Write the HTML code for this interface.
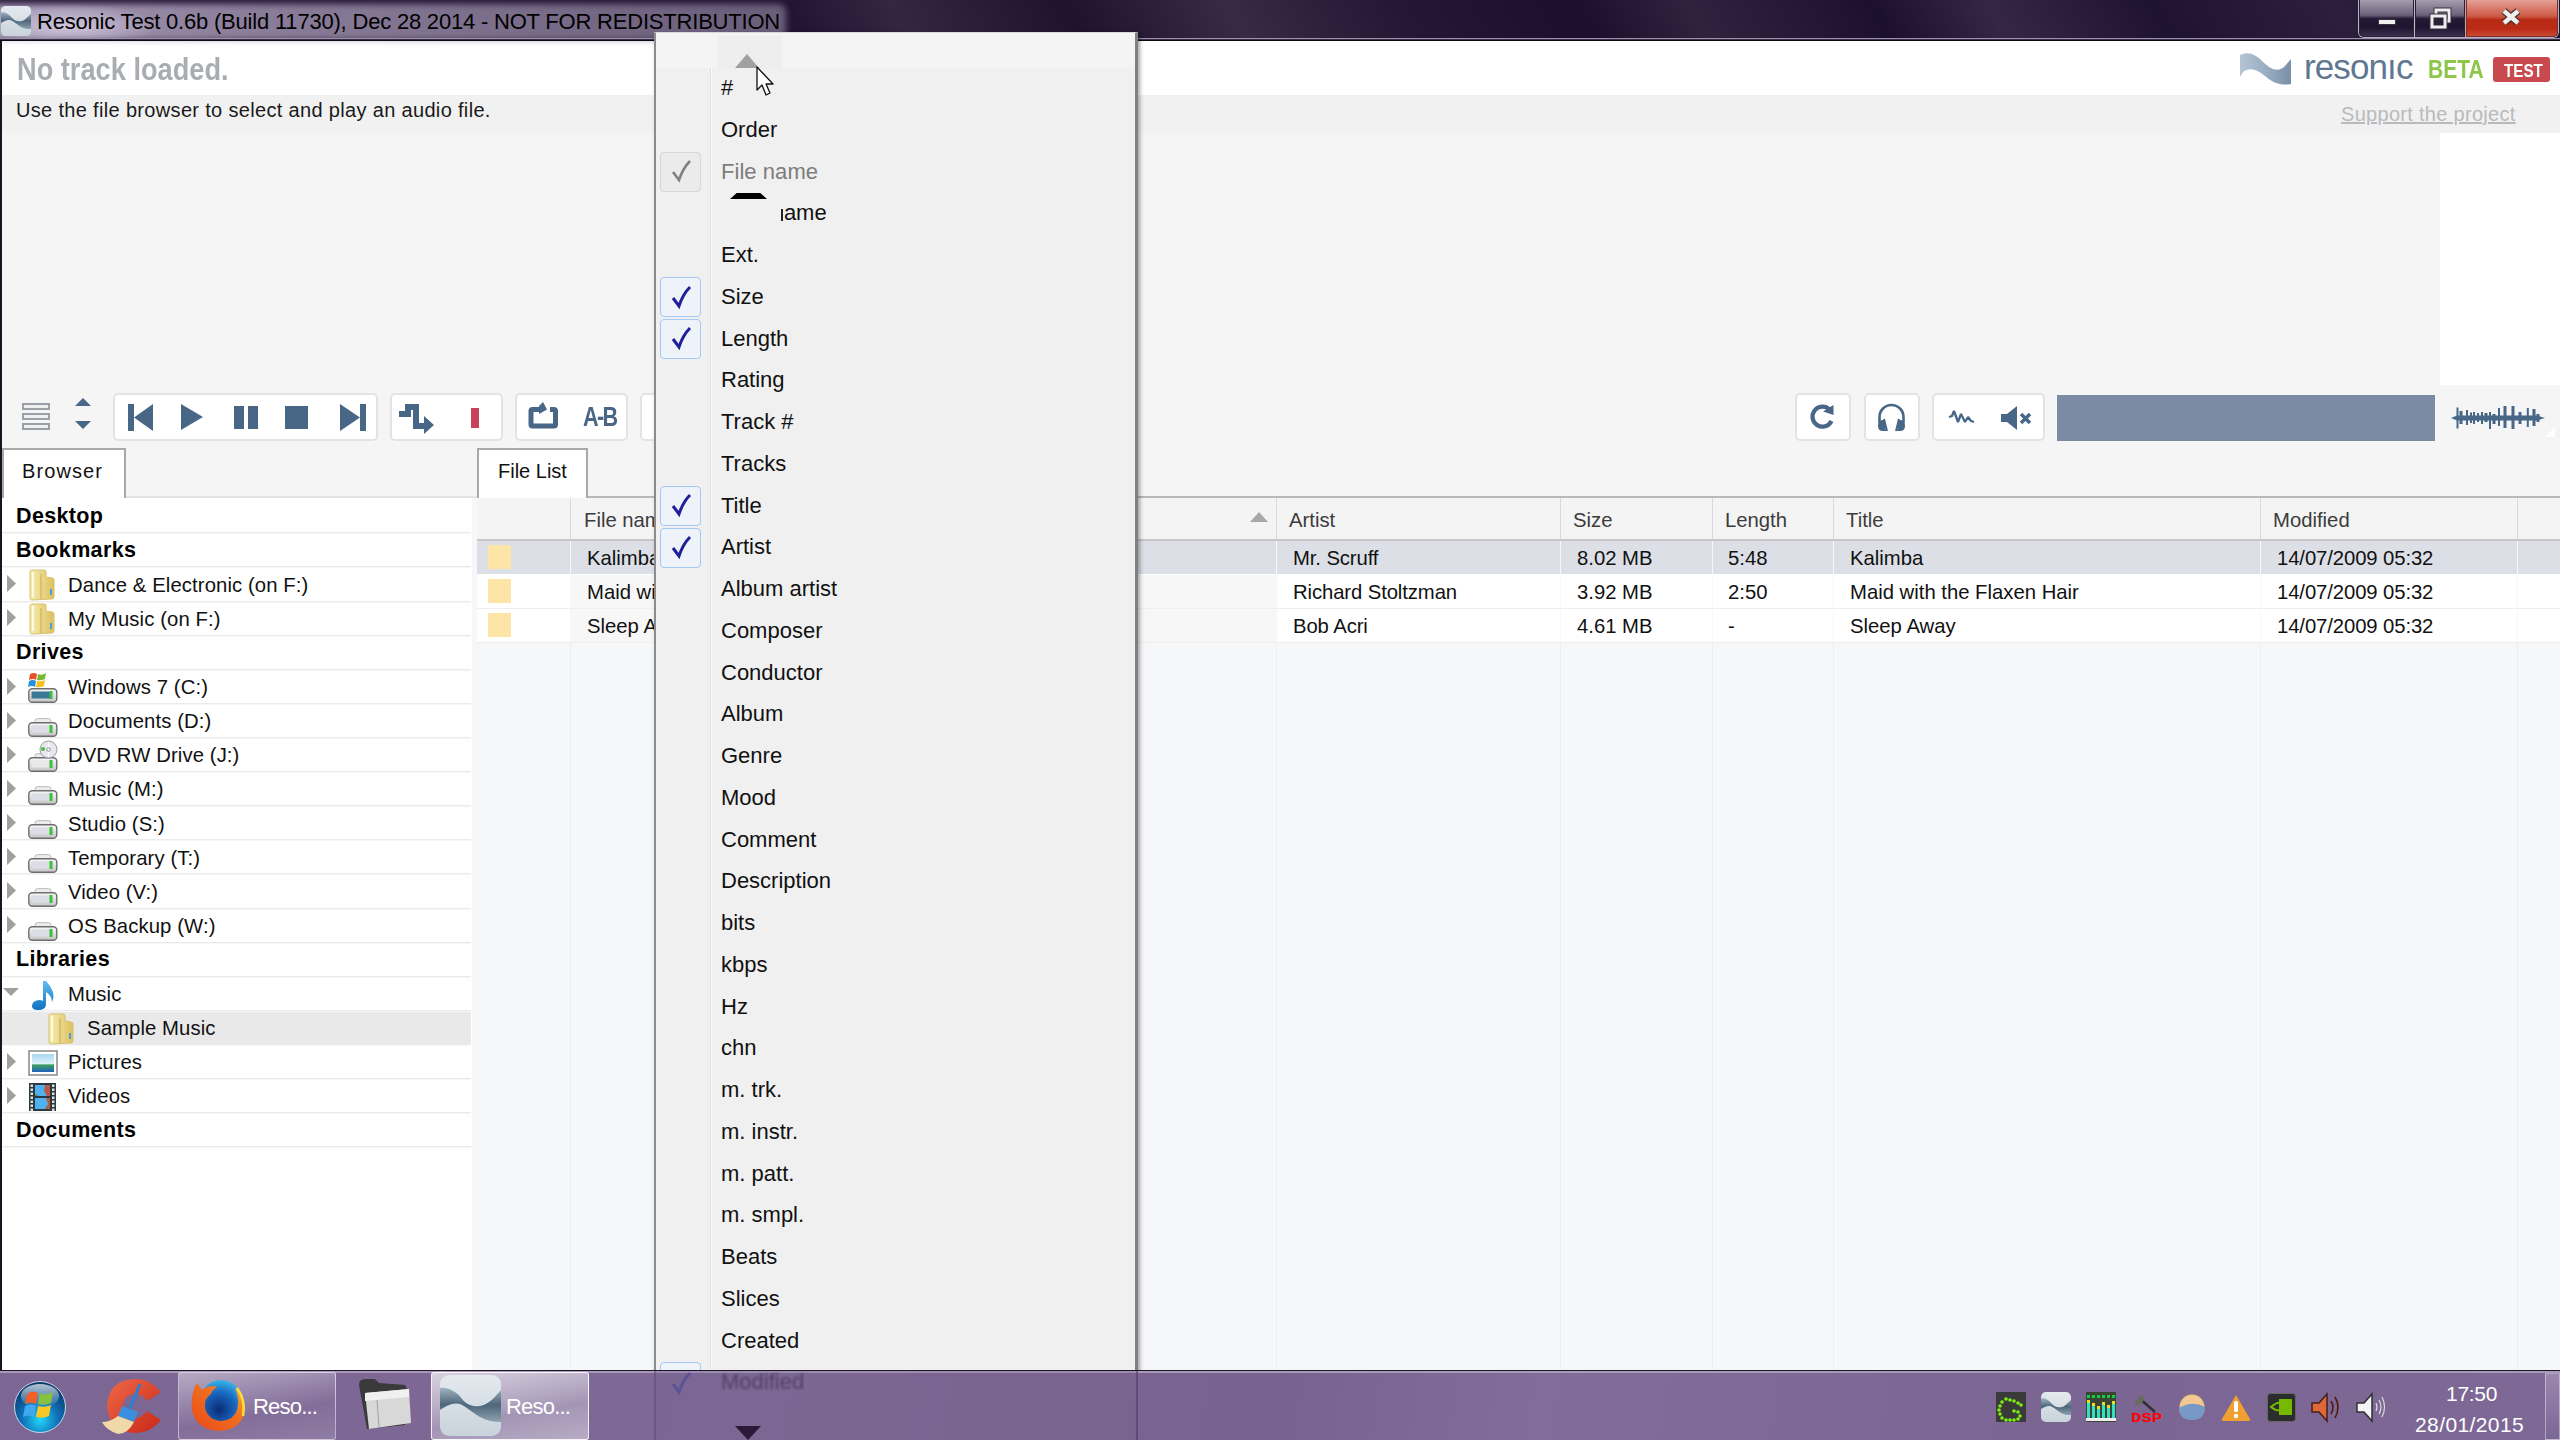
<!DOCTYPE html><html><head><meta charset="utf-8"><style>
*{margin:0;padding:0;box-sizing:border-box}
html,body{width:2560px;height:1440px;overflow:hidden;background:#f4f4f4;font-family:"Liberation Sans", sans-serif;}
.a{position:absolute}
.t{position:absolute;white-space:nowrap;line-height:1}
svg{position:absolute;overflow:visible}
</style></head><body><div class="a" style="left:0px;top:41px;width:2560px;height:54px;background:#fff"></div><div class="a" style="left:0px;top:95px;width:2560px;height:38px;background:#f1f1f1"></div><div class="a" style="left:0px;top:133px;width:2560px;height:365px;background:#f5f5f5"></div><div class="a" style="left:2440px;top:133px;width:120px;height:252px;background:#fff"></div><div class="t" style="left:17px;top:52.8px;font-size:32px;color:#a9adb2;font-weight:bold;transform:scaleX(0.85);transform-origin:0 0">No track loaded.</div><div class="t" style="left:16px;top:100.0px;font-size:20px;color:#1a1a1a;font-weight:normal;letter-spacing:0.33px">Use the file browser to select and play an audio file.</div><svg style="left:2239px;top:52px" width="54" height="32" viewBox="0 0 54 32"><defs><linearGradient id="lg1" x1="0" x2="1"><stop offset="0" stop-color="#b4c4d4"/><stop offset="0.5" stop-color="#9aaec2"/><stop offset="1" stop-color="#7a90a8"/></linearGradient></defs><path d="M1 3 C8 0 14 1 21 7 C30 16 38 22 46 14 L52 7 L52 32 C42 34 34 31 26 24 C18 17 10 15 4 20 L1 25 Z" fill="url(#lg1)"/></svg><div class="t" style="left:2304px;top:49.25px;font-size:35px;color:#5f7790;font-weight:normal;letter-spacing:-0.9px">resonıc</div><div class="t" style="left:2428px;top:56.75px;font-size:25px;color:#8cc74a;font-weight:bold;transform:scaleX(0.84);transform-origin:0 0">BETA</div><div class="a" style="left:2493px;top:57px;width:57px;height:25px;background:#c94a4e;border-radius:3px"></div><div class="t" style="left:2504px;top:60.85px;font-size:19px;color:#fff;font-weight:bold;transform:scaleX(0.8);transform-origin:0 0">TEST</div><div class="t" style="left:2341px;top:104.0px;font-size:20px;color:#b8babd;font-weight:normal;text-decoration:underline;letter-spacing:0.3px">Support the project</div><div class="a" style="left:22px;top:403px;width:28px;height:7px;border:2px solid #9aa0a6;background:#eef0f2"></div><div class="a" style="left:22px;top:413px;width:28px;height:7px;border:2px solid #9aa0a6;background:#eef0f2"></div><div class="a" style="left:22px;top:423px;width:28px;height:7px;border:2px solid #9aa0a6;background:#eef0f2"></div><svg style="left:74px;top:397px" width="18" height="34" viewBox="0 0 18 34"><path d="M1 9 L9 1 L17 9 Z M1 24 L9 32 L17 24 Z" fill="#486787"/></svg><div class="a" style="left:113px;top:393px;width:265px;height:48px;background:#fff;border:2px solid #e3e3e3;border-radius:5px"></div><svg style="left:120px;top:400px" width="250" height="34" viewBox="0 0 250 34"><rect x="8" y="4" width="6" height="27" fill="#486787"/><path d="M14 17.5 L33 4 L33 31 Z" fill="#486787"/><path d="M61 4 L83 17 L61 30 Z" fill="#486787"/><rect x="114" y="6" width="10" height="23" fill="#486787"/><rect x="128" y="6" width="10" height="23" fill="#486787"/><rect x="165" y="6" width="23" height="23" fill="#486787"/><path d="M220 4 L240 17.5 L220 31 Z" fill="#486787"/><rect x="240" y="4" width="6" height="27" fill="#486787"/></svg><div class="a" style="left:390px;top:393px;width:113px;height:48px;background:#fff;border:2px solid #e3e3e3;border-radius:5px"></div><svg style="left:398px;top:400px" width="40" height="34" viewBox="0 0 40 34"><path d="M1 11 L7 11 L7 4 L21 4 L21 23 L26 23 L26 16 L36 25 L26 34 L26 29 L15 29 L15 10 L13 10 L13 17 L1 17 Z" fill="#486787"/></svg><div class="a" style="left:471px;top:408px;width:8px;height:20px;background:#c8435a"></div><div class="a" style="left:515px;top:393px;width:113px;height:48px;background:#fff;border:2px solid #e3e3e3;border-radius:5px"></div><svg style="left:526px;top:400px" width="36" height="32" viewBox="0 0 36 32"><path d="M16 9.5 L6.5 9.5 Q5 9.5 5 11 L5 24.5 Q5 26 6.5 26 L28 26 Q29.5 26 29.5 24.5 L29.5 11 Q29.5 9.5 28 9.5 L24 9.5" fill="none" stroke="#486787" stroke-width="5"/><path d="M13 6 L13 14 L21 9.5 L17 2 Z" fill="#486787"/></svg><div class="t" style="left:583px;top:404.05px;font-size:27px;color:#486787;font-weight:bold;letter-spacing:-2px;transform:scaleX(0.8);transform-origin:0 0">A-B</div><div class="a" style="left:640px;top:393px;width:40px;height:48px;background:#fff;border:2px solid #e3e3e3;border-radius:5px"></div><div class="a" style="left:1795px;top:393px;width:56px;height:48px;background:#fff;border:2px solid #e3e3e3;border-radius:5px"></div><div class="a" style="left:1864px;top:393px;width:56px;height:48px;background:#fff;border:2px solid #e3e3e3;border-radius:5px"></div><div class="a" style="left:1932px;top:393px;width:113px;height:48px;background:#fff;border:2px solid #e3e3e3;border-radius:5px"></div><svg style="left:1806px;top:402px" width="32" height="32" viewBox="0 0 32 32"><path d="M23.5 7.5 A10 10 0 1 0 25.5 19" fill="none" stroke="#486787" stroke-width="4.2"/><path d="M17 9.5 L27.5 3 L27.5 13 Z" fill="#486787"/></svg><svg style="left:1877px;top:403px" width="30" height="30" viewBox="0 0 30 30"><path d="M2.5 20 L2.5 14 A12 12 0 0 1 26.5 14 L26.5 20" fill="none" stroke="#486787" stroke-width="2.6"/><path d="M1 23 Q1 18 5 17 L7 17 L9 28 L6 28 Q1 28 1 23 Z M28 23 Q28 18 24 17 L22 17 L20 28 L23 28 Q28 28 28 23 Z" fill="#486787"/><path d="M7 16 L10 28 M22 16 L19 28" stroke="#486787" stroke-width="2"/></svg><svg style="left:1948px;top:409px" width="28" height="16" viewBox="0 0 28 16"><path d="M1 8 L4 7 L6 2 L10 13 L13 5 L17 13 L20 8 L23 12 L26 13" fill="none" stroke="#486787" stroke-width="2.3" stroke-linejoin="bevel"/></svg><svg style="left:2000px;top:405px" width="34" height="26" viewBox="0 0 34 26"><path d="M1 9 L7 9 L17 1 L17 25 L7 17 L1 17 Z" fill="#486787"/><path d="M21 9 L30 18 M30 9 L21 18" stroke="#486787" stroke-width="3.5"/></svg><div class="a" style="left:2057px;top:395px;width:378px;height:46px;background:#7a8ba3"></div><svg style="left:2451px;top:405px" width="96" height="26" viewBox="0 0 96 26"><path d="M0 13 L6 10.5 L86 10.5 L94 13 L86 15.5 L6 15.5 Z" fill="#486787"/><rect x="5.5" y="2.5" width="2" height="21.0" fill="#486787"/><rect x="8.5" y="6" width="3" height="13" fill="#486787"/><rect x="15.0" y="5" width="2" height="15" fill="#486787"/><rect x="19.0" y="7.5" width="2" height="10.5" fill="#486787"/><rect x="22.0" y="7" width="2" height="12" fill="#486787"/><rect x="26.0" y="8" width="2" height="9" fill="#486787"/><rect x="30.0" y="7" width="2" height="12" fill="#486787"/><rect x="33.5" y="8" width="3" height="9" fill="#486787"/><rect x="38.0" y="7" width="2" height="17" fill="#486787"/><rect x="41.5" y="9" width="3" height="10" fill="#486787"/><rect x="47.0" y="3" width="2" height="18" fill="#486787"/><rect x="52.5" y="1" width="3" height="22" fill="#486787"/><rect x="60.5" y="1" width="3" height="23" fill="#486787"/><rect x="67.5" y="7" width="3" height="12" fill="#486787"/><rect x="75.80000000000018" y="3" width="2" height="19" fill="#486787"/><rect x="81.5" y="4" width="3" height="17" fill="#486787"/><rect x="85.5" y="9" width="3" height="8" fill="#486787"/></svg><svg style="left:2545px;top:427px" width="11" height="11" viewBox="0 0 11 11"><path d="M10 0 L10 10 L0 10 Z" fill="#ffffff"/></svg><div class="a" style="left:2px;top:496px;width:470px;height:2px;background:#e4e4e4"></div><div class="a" style="left:2px;top:448px;width:124px;height:51px;background:#fff;border:2px solid #a9a9a9;border-bottom:none"></div><div class="t" style="left:22px;top:461.0px;font-size:20px;color:#111;font-weight:normal;letter-spacing:1.1px">Browser</div><div class="a" style="left:472px;top:496px;width:6px;height:2px;background:#e4e4e4"></div><div class="a" style="left:588px;top:496px;width:1972px;height:2px;background:#b9b9b9"></div><div class="a" style="left:477px;top:448px;width:111px;height:51px;background:#fff;border:2px solid #a9a9a9;border-bottom:none"></div><div class="t" style="left:498px;top:461.0px;font-size:20px;color:#111;font-weight:normal;">File List</div><div class="a" style="left:0px;top:0px;width:2560px;height:41px;background:linear-gradient(60deg,#2a1b3a 0px,#221433 700px,#342642 790px,#20122f 940px,#382a46 1080px,#241634 1230px,#1c0e2c 1380px,#30223f 1480px,#1d0f2e 1640px,#342644 1740px,#201231 1880px,#2c1e3c 2040px,#1e1130 2200px,#2a1c38 2560px)"></div><div class="a" style="left:-10px;top:4px;width:796px;height:36px;background:linear-gradient(90deg,rgba(190,178,205,0.85) 0,rgba(165,152,180,0.8) 250px,rgba(140,128,156,0.78) 600px,rgba(130,118,146,0.75) 790px);filter:blur(3px);border-radius:8px"></div><div class="a" style="left:0px;top:0px;width:200px;height:41px;background:radial-gradient(ellipse 90px 22px at 70px 26px,rgba(240,232,250,0.6),rgba(240,232,250,0) 100%)"></div><div class="a" style="left:0px;top:39px;width:2560px;height:2px;background:#3b2d48"></div><div class="a" style="left:0px;top:40px;width:2560px;height:1px;background:#0d0812"></div><svg style="left:1px;top:6px" width="30" height="30" viewBox="0 0 30 30"><defs><linearGradient id="rbg1" x1="0" y1="0" x2="0" y2="1"><stop offset="0" stop-color="#e4eaef"/><stop offset="1" stop-color="#c9d3db"/></linearGradient><linearGradient id="rbd1" x1="0" y1="0" x2="0" y2="1"><stop offset="0" stop-color="#9fb2c0"/><stop offset="0.5" stop-color="#4d6679"/><stop offset="1" stop-color="#8ea2b2"/></linearGradient></defs><g transform="scale(0.4918032786885246)"><rect x="0" y="0" width="61" height="61" rx="9.15" fill="url(#rbg1)"/><path d="M0 13 C8 12 16 16 22 24 C27 30 33 32 40 31 C48 30 55 22 61 15 L61 47 C54 47 47 46 40 42 C33 38 27 32 20 29 C13 27 6 31 0 35 Z" fill="url(#rbd1)"/></g></svg><div class="t" style="left:37px;top:11.3px;font-size:22px;color:#000;font-weight:normal;letter-spacing:-0.2px">Resonic Test 0.6b (Build 11730), Dec 28 2014 - NOT FOR REDISTRIBUTION</div><div class="a" style="left:2358px;top:0px;width:201px;height:38px;border:1px solid #b8b0c4;border-top:none;border-radius:0 0 6px 6px"></div><div class="a" style="left:2359px;top:0px;width:55px;height:37px;border:1px solid #2a2036;border-top:none;border-radius:0 0 0 5px;background:linear-gradient(#a69eb0 0%,#8a8096 20%,#6c627a 42%,#241a34 52%,#1e1430 75%,#3a2f4c 100%)"></div><div class="a" style="left:2378px;top:19px;width:18px;height:6px;background:#f0f0f0;border:1px solid #3a3040"></div><div class="a" style="left:2414px;top:0px;width:1px;height:37px;background:#c0b8c8"></div><div class="a" style="left:2415px;top:0px;width:50px;height:37px;border:1px solid #2a2036;border-top:none;background:linear-gradient(#a69eb0 0%,#8a8096 20%,#6c627a 42%,#241a34 52%,#1e1430 75%,#3a2f4c 100%)"></div><svg style="left:2429px;top:7px" width="23" height="20" viewBox="0 0 23 20"><rect x="7" y="3" width="13" height="11" fill="none" stroke="#3a3040" stroke-width="5"/><rect x="7" y="3" width="13" height="11" fill="none" stroke="#eee" stroke-width="3"/><rect x="3" y="9" width="13" height="11" fill="#3a3040" stroke="#3a3040" stroke-width="5"/><rect x="3" y="9" width="13" height="11" fill="#2a2034" stroke="#eee" stroke-width="3"/></svg><div class="a" style="left:2465px;top:0px;width:1px;height:37px;background:#d0a0a0"></div><div class="a" style="left:2466px;top:0px;width:92px;height:37px;border:1px solid #7a3030;border-top:none;border-radius:0 0 5px 0;background:linear-gradient(#e4a096 0%,#d87868 25%,#cc5a48 45%,#b82a14 55%,#bc2a16 80%,#c84a30 100%)"></div><svg style="left:2500px;top:8px" width="22" height="18" viewBox="0 0 22 18"><path d="M4 3 L18 15 M18 3 L4 15" stroke="#50302c" stroke-width="7"/><path d="M4 3 L18 15 M18 3 L4 15" stroke="#eee" stroke-width="4.5"/></svg><div class="a" style="left:0px;top:38px;width:2560px;height:1px;background:#9a90a8"></div><div class="a" style="left:0px;top:41px;width:2px;height:1330px;background:#1a1320"></div><div class="a" style="left:2px;top:498px;width:470px;height:872px;background:#fff"></div><div class="a" style="left:2px;top:532px;width:469px;height:1px;background:#ebebeb"></div><div class="a" style="left:2px;top:533px;width:469px;height:1px;background:#f6f6f6"></div><div class="t" style="left:16px;top:505.52px;font-size:21.5px;color:#000;font-weight:bold;letter-spacing:0.35px">Desktop</div><div class="a" style="left:2px;top:566px;width:469px;height:1px;background:#ebebeb"></div><div class="a" style="left:2px;top:567px;width:469px;height:1px;background:#f6f6f6"></div><div class="t" style="left:16px;top:539.62px;font-size:21.5px;color:#000;font-weight:bold;letter-spacing:0.35px">Bookmarks</div><div class="a" style="left:2px;top:601px;width:469px;height:1px;background:#ebebeb"></div><div class="a" style="left:2px;top:602px;width:469px;height:1px;background:#f6f6f6"></div><svg style="left:7px;top:575px" width="9" height="17" viewBox="0 0 9 17"><path d="M0 0 L9 8.5 L0 17 Z" fill="#a0a0a0"/></svg><svg style="left:29px;top:569px" width="26" height="32" viewBox="0 0 26 32"><defs><linearGradient id="fd" x1="0" x2="1"><stop offset="0" stop-color="#f6eeb0"/><stop offset="1" stop-color="#dcc060"/></linearGradient></defs><path d="M1 3 Q1 1 3 1 L15 1 Q17 1 17 3 L17 8 L23 9 Q25 9 25 11 L25 28 Q25 30 23 30 L3 31 Q1 31 1 29 Z" fill="url(#fd)" stroke="#d8c070" stroke-width="1"/><path d="M4 3 L4 28" stroke="#fffbe0" stroke-width="2"/><path d="M12 5 L12 30" stroke="#c8a850" stroke-width="1"/><rect x="21" y="20" width="2" height="6" fill="#4aa0d0"/></svg><div class="t" style="left:68px;top:574.75px;font-size:20.3px;color:#111;font-weight:normal;letter-spacing:0.1px">Dance &amp; Electronic (on F:)</div><div class="a" style="left:2px;top:635px;width:469px;height:1px;background:#ebebeb"></div><div class="a" style="left:2px;top:636px;width:469px;height:1px;background:#f6f6f6"></div><svg style="left:7px;top:609px" width="9" height="17" viewBox="0 0 9 17"><path d="M0 0 L9 8.5 L0 17 Z" fill="#a0a0a0"/></svg><svg style="left:29px;top:603px" width="26" height="32" viewBox="0 0 26 32"><defs><linearGradient id="fd" x1="0" x2="1"><stop offset="0" stop-color="#f6eeb0"/><stop offset="1" stop-color="#dcc060"/></linearGradient></defs><path d="M1 3 Q1 1 3 1 L15 1 Q17 1 17 3 L17 8 L23 9 Q25 9 25 11 L25 28 Q25 30 23 30 L3 31 Q1 31 1 29 Z" fill="url(#fd)" stroke="#d8c070" stroke-width="1"/><path d="M4 3 L4 28" stroke="#fffbe0" stroke-width="2"/><path d="M12 5 L12 30" stroke="#c8a850" stroke-width="1"/><rect x="21" y="20" width="2" height="6" fill="#4aa0d0"/></svg><div class="t" style="left:68px;top:608.85px;font-size:20.3px;color:#111;font-weight:normal;letter-spacing:0.1px">My Music (on F:)</div><div class="a" style="left:2px;top:669px;width:469px;height:1px;background:#ebebeb"></div><div class="a" style="left:2px;top:670px;width:469px;height:1px;background:#f6f6f6"></div><div class="t" style="left:16px;top:641.93px;font-size:21.5px;color:#000;font-weight:bold;letter-spacing:0.35px">Drives</div><div class="a" style="left:2px;top:703px;width:469px;height:1px;background:#ebebeb"></div><div class="a" style="left:2px;top:704px;width:469px;height:1px;background:#f6f6f6"></div><svg style="left:7px;top:678px" width="9" height="17" viewBox="0 0 9 17"><path d="M0 0 L9 8.5 L0 17 Z" fill="#a0a0a0"/></svg><svg style="left:28px;top:684px" width="30" height="20" viewBox="0 0 30 20"><defs><linearGradient id="hd" x1="0" y1="0" x2="0" y2="1"><stop offset="0" stop-color="#f8f8f8"/><stop offset="1" stop-color="#c4c4c4"/></linearGradient></defs><rect x="0.8" y="4.8" width="28" height="13.5" rx="3.5" fill="url(#hd)" stroke="#6e6e6e" stroke-width="1.4"/><rect x="3.5" y="7.5" width="19" height="7" fill="#3a7898"/><rect x="21.5" y="7" width="3" height="8" fill="#3cc040"/></svg><svg style="left:28px;top:671px" width="22" height="20" viewBox="0 0 22 20"><path d="M2 3 Q6 1 9 3 L8 9 Q5 7 1 9 Z" fill="#e8502a"/><path d="M10 3 Q14 5 18 2 L17 8 Q13 10 9 9 Z" fill="#7ab830"/><path d="M1 10 Q5 8 8 10 L7 16 Q4 14 0 16 Z" fill="#2a90d8"/><path d="M9 10 Q13 11 17 9 L16 15 Q12 17 8 16 Z" fill="#f8c020"/></svg><div class="t" style="left:68px;top:677.04px;font-size:20.3px;color:#111;font-weight:normal;letter-spacing:0.1px">Windows 7 (C:)</div><div class="a" style="left:2px;top:737px;width:469px;height:1px;background:#ebebeb"></div><div class="a" style="left:2px;top:738px;width:469px;height:1px;background:#f6f6f6"></div><svg style="left:7px;top:712px" width="9" height="17" viewBox="0 0 9 17"><path d="M0 0 L9 8.5 L0 17 Z" fill="#a0a0a0"/></svg><svg style="left:28px;top:718px" width="30" height="20" viewBox="0 0 30 20"><defs><linearGradient id="hd" x1="0" y1="0" x2="0" y2="1"><stop offset="0" stop-color="#f8f8f8"/><stop offset="1" stop-color="#c4c4c4"/></linearGradient></defs><rect x="7" y="0.6" width="16" height="6" rx="2.5" fill="#ececec" stroke="#bdbdbd" stroke-width="1"/><rect x="0.8" y="4.8" width="28" height="13.5" rx="3.5" fill="url(#hd)" stroke="#6e6e6e" stroke-width="1.4"/><rect x="3.5" y="7.5" width="19" height="7" fill="#dcdde6"/><rect x="21.5" y="7" width="3" height="8" fill="#3cc040"/></svg><div class="t" style="left:68px;top:711.25px;font-size:20.3px;color:#111;font-weight:normal;letter-spacing:0.1px">Documents (D:)</div><div class="a" style="left:2px;top:771px;width:469px;height:1px;background:#ebebeb"></div><div class="a" style="left:2px;top:772px;width:469px;height:1px;background:#f6f6f6"></div><svg style="left:7px;top:746px" width="9" height="17" viewBox="0 0 9 17"><path d="M0 0 L9 8.5 L0 17 Z" fill="#a0a0a0"/></svg><svg style="left:28px;top:753px" width="30" height="20" viewBox="0 0 30 20"><defs><linearGradient id="hd" x1="0" y1="0" x2="0" y2="1"><stop offset="0" stop-color="#f8f8f8"/><stop offset="1" stop-color="#c4c4c4"/></linearGradient></defs><rect x="7" y="0.6" width="16" height="6" rx="2.5" fill="#ececec" stroke="#bdbdbd" stroke-width="1"/><rect x="0.8" y="4.8" width="28" height="13.5" rx="3.5" fill="url(#hd)" stroke="#6e6e6e" stroke-width="1.4"/><rect x="3.5" y="7.5" width="19" height="7" fill="#e8e8e8"/><rect x="21.5" y="7" width="3" height="8" fill="#3cc040"/></svg><svg style="left:39px;top:740px" width="19" height="19" viewBox="0 0 19 19"><circle cx="9.5" cy="9.5" r="8.5" fill="#e8e6ee" stroke="#9a9aa0"/><path d="M9.5 1 L11 9.5 L9.5 18 L8 9.5 Z" fill="#fff"/><circle cx="4" cy="9" r="2" fill="#40c040"/><circle cx="9.5" cy="9.5" r="1.8" fill="#fff" stroke="#888"/></svg><div class="t" style="left:68px;top:745.35px;font-size:20.3px;color:#111;font-weight:normal;letter-spacing:0.1px">DVD RW Drive (J:)</div><div class="a" style="left:2px;top:805px;width:469px;height:1px;background:#ebebeb"></div><div class="a" style="left:2px;top:806px;width:469px;height:1px;background:#f6f6f6"></div><svg style="left:7px;top:780px" width="9" height="17" viewBox="0 0 9 17"><path d="M0 0 L9 8.5 L0 17 Z" fill="#a0a0a0"/></svg><svg style="left:28px;top:786px" width="30" height="20" viewBox="0 0 30 20"><defs><linearGradient id="hd" x1="0" y1="0" x2="0" y2="1"><stop offset="0" stop-color="#f8f8f8"/><stop offset="1" stop-color="#c4c4c4"/></linearGradient></defs><rect x="7" y="0.6" width="16" height="6" rx="2.5" fill="#ececec" stroke="#bdbdbd" stroke-width="1"/><rect x="0.8" y="4.8" width="28" height="13.5" rx="3.5" fill="url(#hd)" stroke="#6e6e6e" stroke-width="1.4"/><rect x="3.5" y="7.5" width="19" height="7" fill="#dcdde6"/><rect x="21.5" y="7" width="3" height="8" fill="#3cc040"/></svg><div class="t" style="left:68px;top:779.45px;font-size:20.3px;color:#111;font-weight:normal;letter-spacing:0.1px">Music (M:)</div><div class="a" style="left:2px;top:839px;width:469px;height:1px;background:#ebebeb"></div><div class="a" style="left:2px;top:840px;width:469px;height:1px;background:#f6f6f6"></div><svg style="left:7px;top:814px" width="9" height="17" viewBox="0 0 9 17"><path d="M0 0 L9 8.5 L0 17 Z" fill="#a0a0a0"/></svg><svg style="left:28px;top:820px" width="30" height="20" viewBox="0 0 30 20"><defs><linearGradient id="hd" x1="0" y1="0" x2="0" y2="1"><stop offset="0" stop-color="#f8f8f8"/><stop offset="1" stop-color="#c4c4c4"/></linearGradient></defs><rect x="7" y="0.6" width="16" height="6" rx="2.5" fill="#ececec" stroke="#bdbdbd" stroke-width="1"/><rect x="0.8" y="4.8" width="28" height="13.5" rx="3.5" fill="url(#hd)" stroke="#6e6e6e" stroke-width="1.4"/><rect x="3.5" y="7.5" width="19" height="7" fill="#dcdde6"/><rect x="21.5" y="7" width="3" height="8" fill="#3cc040"/></svg><div class="t" style="left:68px;top:813.54px;font-size:20.3px;color:#111;font-weight:normal;letter-spacing:0.1px">Studio  (S:)</div><div class="a" style="left:2px;top:873px;width:469px;height:1px;background:#ebebeb"></div><div class="a" style="left:2px;top:874px;width:469px;height:1px;background:#f6f6f6"></div><svg style="left:7px;top:848px" width="9" height="17" viewBox="0 0 9 17"><path d="M0 0 L9 8.5 L0 17 Z" fill="#a0a0a0"/></svg><svg style="left:28px;top:854px" width="30" height="20" viewBox="0 0 30 20"><defs><linearGradient id="hd" x1="0" y1="0" x2="0" y2="1"><stop offset="0" stop-color="#f8f8f8"/><stop offset="1" stop-color="#c4c4c4"/></linearGradient></defs><rect x="7" y="0.6" width="16" height="6" rx="2.5" fill="#ececec" stroke="#bdbdbd" stroke-width="1"/><rect x="0.8" y="4.8" width="28" height="13.5" rx="3.5" fill="url(#hd)" stroke="#6e6e6e" stroke-width="1.4"/><rect x="3.5" y="7.5" width="19" height="7" fill="#dcdde6"/><rect x="21.5" y="7" width="3" height="8" fill="#3cc040"/></svg><div class="t" style="left:68px;top:847.64px;font-size:20.3px;color:#111;font-weight:normal;letter-spacing:0.1px">Temporary (T:)</div><div class="a" style="left:2px;top:908px;width:469px;height:1px;background:#ebebeb"></div><div class="a" style="left:2px;top:909px;width:469px;height:1px;background:#f6f6f6"></div><svg style="left:7px;top:882px" width="9" height="17" viewBox="0 0 9 17"><path d="M0 0 L9 8.5 L0 17 Z" fill="#a0a0a0"/></svg><svg style="left:28px;top:888px" width="30" height="20" viewBox="0 0 30 20"><defs><linearGradient id="hd" x1="0" y1="0" x2="0" y2="1"><stop offset="0" stop-color="#f8f8f8"/><stop offset="1" stop-color="#c4c4c4"/></linearGradient></defs><rect x="7" y="0.6" width="16" height="6" rx="2.5" fill="#ececec" stroke="#bdbdbd" stroke-width="1"/><rect x="0.8" y="4.8" width="28" height="13.5" rx="3.5" fill="url(#hd)" stroke="#6e6e6e" stroke-width="1.4"/><rect x="3.5" y="7.5" width="19" height="7" fill="#dcdde6"/><rect x="21.5" y="7" width="3" height="8" fill="#3cc040"/></svg><div class="t" style="left:68px;top:881.75px;font-size:20.3px;color:#111;font-weight:normal;letter-spacing:0.1px">Video (V:)</div><div class="a" style="left:2px;top:942px;width:469px;height:1px;background:#ebebeb"></div><div class="a" style="left:2px;top:943px;width:469px;height:1px;background:#f6f6f6"></div><svg style="left:7px;top:916px" width="9" height="17" viewBox="0 0 9 17"><path d="M0 0 L9 8.5 L0 17 Z" fill="#a0a0a0"/></svg><svg style="left:28px;top:922px" width="30" height="20" viewBox="0 0 30 20"><defs><linearGradient id="hd" x1="0" y1="0" x2="0" y2="1"><stop offset="0" stop-color="#f8f8f8"/><stop offset="1" stop-color="#c4c4c4"/></linearGradient></defs><rect x="7" y="0.6" width="16" height="6" rx="2.5" fill="#ececec" stroke="#bdbdbd" stroke-width="1"/><rect x="0.8" y="4.8" width="28" height="13.5" rx="3.5" fill="url(#hd)" stroke="#6e6e6e" stroke-width="1.4"/><rect x="3.5" y="7.5" width="19" height="7" fill="#dcdde6"/><rect x="21.5" y="7" width="3" height="8" fill="#3cc040"/></svg><div class="t" style="left:68px;top:915.85px;font-size:20.3px;color:#111;font-weight:normal;letter-spacing:0.1px">OS Backup (W:)</div><div class="a" style="left:2px;top:976px;width:469px;height:1px;background:#ebebeb"></div><div class="a" style="left:2px;top:977px;width:469px;height:1px;background:#f6f6f6"></div><div class="t" style="left:16px;top:948.93px;font-size:21.5px;color:#000;font-weight:bold;letter-spacing:0.35px">Libraries</div><div class="a" style="left:2px;top:1010px;width:469px;height:1px;background:#ebebeb"></div><div class="a" style="left:2px;top:1011px;width:469px;height:1px;background:#f6f6f6"></div><svg style="left:3px;top:988px" width="16" height="10" viewBox="0 0 16 10"><path d="M0 0 L16 0 L8 8 Z" fill="#a0a0a0"/></svg><svg style="left:29px;top:980px" width="26" height="30" viewBox="0 0 26 30"><defs><linearGradient id="mn" x1="0" y1="0" x2="0" y2="1"><stop offset="0" stop-color="#60c0f0"/><stop offset="1" stop-color="#1070c0"/></linearGradient></defs><path d="M14 1 L17 1 Q22 6 24 12 Q25 18 23 22 Q23 16 17 12 L17 24 Q17 30 9 30 Q3 30 3 26 Q3 21 10 20 Q13 20 14 21 Z" fill="url(#mn)"/></svg><div class="t" style="left:68px;top:984.04px;font-size:20.3px;color:#111;font-weight:normal;letter-spacing:0.1px">Music</div><div class="a" style="left:2px;top:1012px;width:469px;height:34px;background:#e9e9e9"></div><div class="a" style="left:2px;top:1044px;width:469px;height:1px;background:#ebebeb"></div><div class="a" style="left:2px;top:1045px;width:469px;height:1px;background:#f6f6f6"></div><svg style="left:48px;top:1013px" width="26" height="32" viewBox="0 0 26 32"><defs><linearGradient id="fd" x1="0" x2="1"><stop offset="0" stop-color="#f6eeb0"/><stop offset="1" stop-color="#dcc060"/></linearGradient></defs><path d="M1 3 Q1 1 3 1 L15 1 Q17 1 17 3 L17 8 L23 9 Q25 9 25 11 L25 28 Q25 30 23 30 L3 31 Q1 31 1 29 Z" fill="url(#fd)" stroke="#d8c070" stroke-width="1"/><path d="M4 3 L4 28" stroke="#fffbe0" stroke-width="2"/><path d="M12 5 L12 30" stroke="#c8a850" stroke-width="1"/><rect x="21" y="20" width="2" height="6" fill="#4aa0d0"/></svg><div class="t" style="left:87px;top:1018.25px;font-size:20.3px;color:#111;font-weight:normal;letter-spacing:0.1px">Sample Music</div><div class="a" style="left:2px;top:1078px;width:469px;height:1px;background:#ebebeb"></div><div class="a" style="left:2px;top:1079px;width:469px;height:1px;background:#f6f6f6"></div><svg style="left:7px;top:1053px" width="9" height="17" viewBox="0 0 9 17"><path d="M0 0 L9 8.5 L0 17 Z" fill="#a0a0a0"/></svg><svg style="left:28px;top:1050px" width="30" height="26" viewBox="0 0 30 26"><rect x="1" y="1" width="28" height="24" fill="#fff" stroke="#888" stroke-width="1.5"/><defs><linearGradient id="pc" x1="0" y1="0" x2="0" y2="1"><stop offset="0" stop-color="#a8d8f0"/><stop offset="0.55" stop-color="#e0f0f8"/><stop offset="0.6" stop-color="#40a060"/><stop offset="1" stop-color="#2060c0"/></linearGradient></defs><rect x="4" y="4" width="22" height="18" fill="url(#pc)"/></svg><div class="t" style="left:68px;top:1052.34px;font-size:20.3px;color:#111;font-weight:normal;letter-spacing:0.1px">Pictures</div><div class="a" style="left:2px;top:1112px;width:469px;height:1px;background:#ebebeb"></div><div class="a" style="left:2px;top:1113px;width:469px;height:1px;background:#f6f6f6"></div><svg style="left:7px;top:1087px" width="9" height="17" viewBox="0 0 9 17"><path d="M0 0 L9 8.5 L0 17 Z" fill="#a0a0a0"/></svg><svg style="left:29px;top:1083px" width="27" height="28" viewBox="0 0 27 28"><rect x="0" y="0" width="27" height="28" fill="#2c3a40"/><rect x="6" y="2" width="15" height="11" fill="#50b0f0"/><rect x="6" y="15" width="15" height="11" fill="#50b0f0"/><path d="M16 2 L21 2 L21 13 L18 13 L15 8 Z" fill="#b85848"/><path d="M17 15 L21 15 L21 26 L16 26 L19 21 Z" fill="#b06040"/><path d="M6 11 L10 13 L6 13 Z" fill="#608040"/><rect x="1.5" y="1.5" width="2.5" height="2.5" fill="#ddd"/><rect x="23" y="1.5" width="2.5" height="2.5" fill="#ddd"/><rect x="1.5" y="5.5" width="2.5" height="2.5" fill="#ddd"/><rect x="23" y="5.5" width="2.5" height="2.5" fill="#ddd"/><rect x="1.5" y="9.5" width="2.5" height="2.5" fill="#ddd"/><rect x="23" y="9.5" width="2.5" height="2.5" fill="#ddd"/><rect x="1.5" y="13.5" width="2.5" height="2.5" fill="#ddd"/><rect x="23" y="13.5" width="2.5" height="2.5" fill="#ddd"/><rect x="1.5" y="17.5" width="2.5" height="2.5" fill="#ddd"/><rect x="23" y="17.5" width="2.5" height="2.5" fill="#ddd"/><rect x="1.5" y="21.5" width="2.5" height="2.5" fill="#ddd"/><rect x="23" y="21.5" width="2.5" height="2.5" fill="#ddd"/><rect x="1.5" y="25.5" width="2.5" height="2.5" fill="#ddd"/><rect x="23" y="25.5" width="2.5" height="2.5" fill="#ddd"/></svg><div class="t" style="left:68px;top:1086.44px;font-size:20.3px;color:#111;font-weight:normal;letter-spacing:0.1px">Videos</div><div class="a" style="left:2px;top:1146px;width:469px;height:1px;background:#ebebeb"></div><div class="a" style="left:2px;top:1147px;width:469px;height:1px;background:#f6f6f6"></div><div class="t" style="left:16px;top:1119.52px;font-size:21.5px;color:#000;font-weight:bold;letter-spacing:0.35px">Documents</div><div class="a" style="left:472px;top:498px;width:2088px;height:872px;background:#f6f7f9"></div><div class="a" style="left:477px;top:498px;width:2083px;height:41px;background:#f4f4f4"></div><div class="a" style="left:477px;top:539px;width:2083px;height:2px;background:#c6c6c6"></div><div class="a" style="left:570px;top:498px;width:1px;height:41px;background:#d9d9d9"></div><div class="a" style="left:570px;top:643px;width:1px;height:727px;background:#eceef0"></div><div class="a" style="left:1276px;top:498px;width:1px;height:41px;background:#d9d9d9"></div><div class="a" style="left:1276px;top:643px;width:1px;height:727px;background:#eceef0"></div><div class="a" style="left:1560px;top:498px;width:1px;height:41px;background:#d9d9d9"></div><div class="a" style="left:1560px;top:643px;width:1px;height:727px;background:#eceef0"></div><div class="a" style="left:1712px;top:498px;width:1px;height:41px;background:#d9d9d9"></div><div class="a" style="left:1712px;top:643px;width:1px;height:727px;background:#eceef0"></div><div class="a" style="left:1833px;top:498px;width:1px;height:41px;background:#d9d9d9"></div><div class="a" style="left:1833px;top:643px;width:1px;height:727px;background:#eceef0"></div><div class="a" style="left:2260px;top:498px;width:1px;height:41px;background:#d9d9d9"></div><div class="a" style="left:2260px;top:643px;width:1px;height:727px;background:#eceef0"></div><div class="a" style="left:2517px;top:498px;width:1px;height:41px;background:#d9d9d9"></div><div class="a" style="left:2517px;top:643px;width:1px;height:727px;background:#eceef0"></div><svg style="left:1250px;top:512px" width="18" height="10" viewBox="0 0 18 10"><path d="M0 10 L9 0 L18 10 Z" fill="#a8a8a8"/></svg><div class="t" style="left:584px;top:509.75px;font-size:20.3px;color:#3c3c3c;font-weight:normal;">File name</div><div class="t" style="left:1289px;top:509.75px;font-size:20.3px;color:#3c3c3c;font-weight:normal;">Artist</div><div class="t" style="left:1573px;top:509.75px;font-size:20.3px;color:#3c3c3c;font-weight:normal;">Size</div><div class="t" style="left:1725px;top:509.75px;font-size:20.3px;color:#3c3c3c;font-weight:normal;">Length</div><div class="t" style="left:1846px;top:509.75px;font-size:20.3px;color:#3c3c3c;font-weight:normal;">Title</div><div class="t" style="left:2273px;top:509.75px;font-size:20.3px;color:#3c3c3c;font-weight:normal;">Modified</div><div class="a" style="left:477px;top:541px;width:93px;height:33px;background:#dcdfe6"></div><div class="a" style="left:571px;top:541px;width:705px;height:33px;background:#dcdfe6"></div><div class="a" style="left:1277px;top:541px;width:283px;height:33px;background:#dcdfe6"></div><div class="a" style="left:1561px;top:541px;width:151px;height:33px;background:#dcdfe6"></div><div class="a" style="left:1713px;top:541px;width:120px;height:33px;background:#dcdfe6"></div><div class="a" style="left:1834px;top:541px;width:426px;height:33px;background:#dcdfe6"></div><div class="a" style="left:2261px;top:541px;width:256px;height:33px;background:#dcdfe6"></div><div class="a" style="left:2518px;top:541px;width:42px;height:33px;background:#dcdfe6"></div><div class="a" style="left:477px;top:574px;width:2083px;height:1px;background:#ffffff"></div><div class="a" style="left:488px;top:545px;width:23px;height:24px;background:#fde5a8"></div><div class="t" style="left:587px;top:547.75px;font-size:20.3px;color:#111;font-weight:normal;">Kalimba</div><div class="t" style="left:1293px;top:547.75px;font-size:20.3px;color:#111;font-weight:normal;letter-spacing:-0.1px">Mr. Scruff</div><div class="t" style="left:1577px;top:547.75px;font-size:20.3px;color:#111;font-weight:normal;">8.02 MB</div><div class="t" style="left:1728px;top:547.75px;font-size:20.3px;color:#111;font-weight:normal;">5:48</div><div class="t" style="left:1850px;top:547.75px;font-size:20.3px;color:#111;font-weight:normal;">Kalimba</div><div class="t" style="left:2277px;top:547.75px;font-size:20.3px;color:#111;font-weight:normal;letter-spacing:-0.1px">14/07/2009 05:32</div><div class="a" style="left:477px;top:575px;width:93px;height:33px;background:#ffffff"></div><div class="a" style="left:571px;top:575px;width:705px;height:33px;background:#f7f7f7"></div><div class="a" style="left:1277px;top:575px;width:283px;height:33px;background:#ffffff"></div><div class="a" style="left:1561px;top:575px;width:151px;height:33px;background:#ffffff"></div><div class="a" style="left:1713px;top:575px;width:120px;height:33px;background:#ffffff"></div><div class="a" style="left:1834px;top:575px;width:426px;height:33px;background:#ffffff"></div><div class="a" style="left:2261px;top:575px;width:256px;height:33px;background:#ffffff"></div><div class="a" style="left:2518px;top:575px;width:42px;height:33px;background:#ffffff"></div><div class="a" style="left:477px;top:608px;width:2083px;height:1px;background:#eeeeee"></div><div class="a" style="left:488px;top:579px;width:23px;height:24px;background:#fde5a8"></div><div class="t" style="left:587px;top:581.75px;font-size:20.3px;color:#111;font-weight:normal;">Maid with the Flaxen Hair.mp3</div><div class="t" style="left:1293px;top:581.75px;font-size:20.3px;color:#111;font-weight:normal;letter-spacing:-0.1px">Richard Stoltzman</div><div class="t" style="left:1577px;top:581.75px;font-size:20.3px;color:#111;font-weight:normal;">3.92 MB</div><div class="t" style="left:1728px;top:581.75px;font-size:20.3px;color:#111;font-weight:normal;">2:50</div><div class="t" style="left:1850px;top:581.75px;font-size:20.3px;color:#111;font-weight:normal;">Maid with the Flaxen Hair</div><div class="t" style="left:2277px;top:581.75px;font-size:20.3px;color:#111;font-weight:normal;letter-spacing:-0.1px">14/07/2009 05:32</div><div class="a" style="left:477px;top:609px;width:93px;height:33px;background:#ffffff"></div><div class="a" style="left:571px;top:609px;width:705px;height:33px;background:#f7f7f7"></div><div class="a" style="left:1277px;top:609px;width:283px;height:33px;background:#ffffff"></div><div class="a" style="left:1561px;top:609px;width:151px;height:33px;background:#ffffff"></div><div class="a" style="left:1713px;top:609px;width:120px;height:33px;background:#ffffff"></div><div class="a" style="left:1834px;top:609px;width:426px;height:33px;background:#ffffff"></div><div class="a" style="left:2261px;top:609px;width:256px;height:33px;background:#ffffff"></div><div class="a" style="left:2518px;top:609px;width:42px;height:33px;background:#ffffff"></div><div class="a" style="left:477px;top:642px;width:2083px;height:1px;background:#eeeeee"></div><div class="a" style="left:488px;top:613px;width:23px;height:24px;background:#fde5a8"></div><div class="t" style="left:587px;top:615.75px;font-size:20.3px;color:#111;font-weight:normal;">Sleep Away.mp3</div><div class="t" style="left:1293px;top:615.75px;font-size:20.3px;color:#111;font-weight:normal;letter-spacing:-0.1px">Bob Acri</div><div class="t" style="left:1577px;top:615.75px;font-size:20.3px;color:#111;font-weight:normal;">4.61 MB</div><div class="t" style="left:1728px;top:615.75px;font-size:20.3px;color:#111;font-weight:normal;">-</div><div class="t" style="left:1850px;top:615.75px;font-size:20.3px;color:#111;font-weight:normal;">Sleep Away</div><div class="t" style="left:2277px;top:615.75px;font-size:20.3px;color:#111;font-weight:normal;letter-spacing:-0.1px">14/07/2009 05:32</div><div class="a" style="left:654px;top:32px;width:484px;height:1408px;box-shadow:2px 2px 4px rgba(0,0,0,0.35)"></div><div class="a" style="left:654px;top:32px;width:484px;height:1408px;background:#f0f0f0;border:2px solid #8c8c8c;border-top:1px solid #d8d8d8;border-right:3px solid #808080"></div><div class="a" style="left:656px;top:33px;width:479px;height:35px;background:#f4f4f4"></div><div class="a" style="left:718px;top:36px;width:64px;height:32px;background:#eeeeee"></div><svg style="left:735px;top:54px" width="24" height="14" viewBox="0 0 24 14"><path d="M0 14 L12 0 L24 14 Z" fill="#a0a0a0"/></svg><div class="a" style="left:710px;top:68px;width:1px;height:1372px;background:#e0e0e0"></div><div class="a" style="left:711px;top:68px;width:1px;height:1372px;background:#fafafa"></div><div class="t" style="left:721px;top:77.15px;font-size:22px;color:#111;font-weight:normal;">#</div><div class="t" style="left:721px;top:118.9px;font-size:22px;color:#111;font-weight:normal;">Order</div><div class="a" style="left:660px;top:152px;width:41px;height:40px;background:#ebebeb;border:1px solid #d6d6d6;border-radius:4px"></div><svg style="left:672px;top:160px" width="19" height="23" viewBox="0 0 19 23"><path d="M1 12 L7 20 Q11 8 18 1" fill="none" stroke="#808080" stroke-width="2.6"/></svg><div class="t" style="left:721px;top:160.65px;font-size:22px;color:#7d7d7d;font-weight:normal;letter-spacing:0.05px">File name</div><div class="a" style="left:730px;top:193px;width:37px;height:6px;background:#000;clip-path:polygon(18% 0,82% 0,100% 100%,0 100%)"></div><div class="t" style="left:768px;top:202.4px;font-size:22px;color:#111;font-weight:normal;clip-path:inset(0 0 0 16px)">Name</div><div class="a" style="left:781px;top:209px;width:2px;height:12px;background:#222"></div><div class="t" style="left:721px;top:244.15px;font-size:22px;color:#111;font-weight:normal;">Ext.</div><div class="a" style="left:660px;top:277px;width:41px;height:40px;background:#eef2f9;border:1.5px solid #a6c8f4;border-radius:4px"></div><svg style="left:672px;top:286px" width="19" height="23" viewBox="0 0 19 23"><path d="M1 12 L7 20 Q11 8 18 1" fill="none" stroke="#1f1f9c" stroke-width="3"/></svg><div class="t" style="left:721px;top:285.9px;font-size:22px;color:#111;font-weight:normal;">Size</div><div class="a" style="left:660px;top:319px;width:41px;height:40px;background:#eef2f9;border:1.5px solid #a6c8f4;border-radius:4px"></div><svg style="left:672px;top:327px" width="19" height="23" viewBox="0 0 19 23"><path d="M1 12 L7 20 Q11 8 18 1" fill="none" stroke="#1f1f9c" stroke-width="3"/></svg><div class="t" style="left:721px;top:327.65px;font-size:22px;color:#111;font-weight:normal;">Length</div><div class="t" style="left:721px;top:369.4px;font-size:22px;color:#111;font-weight:normal;">Rating</div><div class="t" style="left:721px;top:411.15px;font-size:22px;color:#111;font-weight:normal;">Track #</div><div class="t" style="left:721px;top:452.9px;font-size:22px;color:#111;font-weight:normal;">Tracks</div><div class="a" style="left:660px;top:486px;width:41px;height:40px;background:#eef2f9;border:1.5px solid #a6c8f4;border-radius:4px"></div><svg style="left:672px;top:494px" width="19" height="23" viewBox="0 0 19 23"><path d="M1 12 L7 20 Q11 8 18 1" fill="none" stroke="#1f1f9c" stroke-width="3"/></svg><div class="t" style="left:721px;top:494.65px;font-size:22px;color:#111;font-weight:normal;">Title</div><div class="a" style="left:660px;top:528px;width:41px;height:40px;background:#eef2f9;border:1.5px solid #a6c8f4;border-radius:4px"></div><svg style="left:672px;top:536px" width="19" height="23" viewBox="0 0 19 23"><path d="M1 12 L7 20 Q11 8 18 1" fill="none" stroke="#1f1f9c" stroke-width="3"/></svg><div class="t" style="left:721px;top:536.4px;font-size:22px;color:#111;font-weight:normal;">Artist</div><div class="t" style="left:721px;top:578.15px;font-size:22px;color:#111;font-weight:normal;">Album artist</div><div class="t" style="left:721px;top:619.9px;font-size:22px;color:#111;font-weight:normal;">Composer</div><div class="t" style="left:721px;top:661.65px;font-size:22px;color:#111;font-weight:normal;">Conductor</div><div class="t" style="left:721px;top:703.4px;font-size:22px;color:#111;font-weight:normal;">Album</div><div class="t" style="left:721px;top:745.15px;font-size:22px;color:#111;font-weight:normal;">Genre</div><div class="t" style="left:721px;top:786.9px;font-size:22px;color:#111;font-weight:normal;">Mood</div><div class="t" style="left:721px;top:828.65px;font-size:22px;color:#111;font-weight:normal;">Comment</div><div class="t" style="left:721px;top:870.4px;font-size:22px;color:#111;font-weight:normal;">Description</div><div class="t" style="left:721px;top:912.15px;font-size:22px;color:#111;font-weight:normal;">bits</div><div class="t" style="left:721px;top:953.9px;font-size:22px;color:#111;font-weight:normal;">kbps</div><div class="t" style="left:721px;top:995.65px;font-size:22px;color:#111;font-weight:normal;">Hz</div><div class="t" style="left:721px;top:1037.4px;font-size:22px;color:#111;font-weight:normal;">chn</div><div class="t" style="left:721px;top:1079.15px;font-size:22px;color:#111;font-weight:normal;">m. trk.</div><div class="t" style="left:721px;top:1120.9px;font-size:22px;color:#111;font-weight:normal;">m. instr.</div><div class="t" style="left:721px;top:1162.65px;font-size:22px;color:#111;font-weight:normal;">m. patt.</div><div class="t" style="left:721px;top:1204.4px;font-size:22px;color:#111;font-weight:normal;">m. smpl.</div><div class="t" style="left:721px;top:1246.15px;font-size:22px;color:#111;font-weight:normal;">Beats</div><div class="t" style="left:721px;top:1287.9px;font-size:22px;color:#111;font-weight:normal;">Slices</div><div class="t" style="left:721px;top:1329.65px;font-size:22px;color:#111;font-weight:normal;">Created</div><div class="a" style="left:660px;top:1362px;width:41px;height:40px;background:#eef2f9;border:1.5px solid #a6c8f4;border-radius:4px"></div><svg style="left:672px;top:1371px" width="19" height="23" viewBox="0 0 19 23"><path d="M1 12 L7 20 Q11 8 18 1" fill="none" stroke="#1f1f9c" stroke-width="3"/></svg><div class="t" style="left:721px;top:1371.4px;font-size:22px;color:#111;font-weight:normal;">Modified</div><div class="a" style="left:0;top:1370px;width:2560px;height:1px;background:#1c1424"></div><div class="a" style="left:0px;top:1371px;width:2560px;height:69px;background:linear-gradient(100deg,#7c6694 0%,#7d6896 30%,#78628f 50%,#826c9a 60%,#7b6593 80%,#7e6896 100%)"></div><div class="a" style="left:0px;top:1371px;width:2560px;height:2px;background:#a898bc"></div><div class="a" style="left:654px;top:1371px;width:484px;height:69px;background:rgba(120,100,140,0.25);border-left:2px solid rgba(80,60,100,0.4);border-right:2px solid rgba(70,50,90,0.5)"></div><div class="t" style="left:721px;top:1371.3px;font-size:22px;color:rgba(50,30,70,0.55);font-weight:normal;filter:blur(1.2px)">Modified</div><svg style="left:672px;top:1372px" width="19" height="23" viewBox="0 0 19 23"><path d="M1 12 L7 20 Q11 8 18 1" fill="none" stroke="rgba(60,60,150,0.5)" stroke-width="3"/></svg><svg style="left:735px;top:1426px" width="26" height="14" viewBox="0 0 26 14"><path d="M0 0 L26 0 L13 14 Z" fill="#2a1a38"/></svg><svg style="left:13px;top:1380px" width="54" height="54" viewBox="0 0 54 54"><defs><radialGradient id="so" cx="0.5" cy="0.75" r="0.7"><stop offset="0" stop-color="#20d8f8"/><stop offset="0.5" stop-color="#1070b8"/><stop offset="1" stop-color="#0a3a68"/></radialGradient><linearGradient id="sh" x1="0" y1="0" x2="0" y2="1"><stop offset="0" stop-color="rgba(255,255,255,0.7)"/><stop offset="1" stop-color="rgba(255,255,255,0)"/></linearGradient></defs><circle cx="27" cy="27" r="25.5" fill="url(#so)" stroke="#c8d8f0" stroke-width="1"/><ellipse cx="27" cy="16" rx="19" ry="12" fill="url(#sh)"/><path d="M14 14 Q19 10 25 13 L23 24 Q18 21 12 24 Z" fill="#f06028"/><path d="M27 13 Q33 16 40 12 L38 23 Q32 26 25 24 Z" fill="#88c040"/><path d="M12 26 Q18 23 23 26 L21 37 Q16 34 10 37 Z" fill="#40a8f0"/><path d="M25 26 Q32 28 38 25 L36 36 Q30 39 23 37 Z" fill="#f8c828"/></svg><svg style="left:100px;top:1378px" width="62" height="56" viewBox="0 0 62 56"><defs><linearGradient id="ccg" x1="0" y1="0" x2="1" y2="1"><stop offset="0" stop-color="#f06848"/><stop offset="1" stop-color="#c82818"/></linearGradient></defs><path d="M61 14 Q50 1 36 1 Q9 1 7 28 Q9 55 36 55 Q50 55 61 42 L47 33 Q42 40 36 40 Q24 39 23 28 Q24 16 36 16 Q42 16 47 23 Z" fill="url(#ccg)"/><path d="M40 6 L30 30" stroke="#2a80d0" stroke-width="3"/><path d="M22 28 L38 34 L34 44 L18 38 Z" fill="#3a90e0"/><path d="M18 38 L34 44 Q28 56 18 56 Q6 52 2 44 Q10 44 18 38 Z" fill="#f0d8a8"/></svg><div class="a" style="left:178px;top:1372px;width:158px;height:68px;border:1px solid rgba(255,255,255,0.45);border-radius:3px;background:linear-gradient(170deg,rgba(255,255,255,0.45) 0%,rgba(255,255,255,0.18) 40%,rgba(255,255,255,0.05) 60%,rgba(255,255,255,0.15) 100%)"></div><svg style="left:190px;top:1378px" width="56" height="54" viewBox="0 0 56 54"><defs><radialGradient id="ffb" cx="0.45" cy="0.7" r="0.7"><stop offset="0" stop-color="#0c2a78"/><stop offset="0.6" stop-color="#1a6ac0"/><stop offset="1" stop-color="#38b4e8"/></radialGradient><linearGradient id="ffo" x1="0" y1="1" x2="1" y2="0"><stop offset="0" stop-color="#e84818"/><stop offset="0.6" stop-color="#f07020"/><stop offset="1" stop-color="#f8c030"/></linearGradient></defs><circle cx="31" cy="23" r="21" fill="url(#ffb)"/><path d="M7 5 L12 12 Q20 6 27 9 Q22 12 21 16 Q14 20 15 30 Q18 42 31 43 Q44 42 47 32 Q50 22 45 10 Q55 18 55 31 Q53 51 30 53 Q6 52 2 32 Q0 16 7 5 Z" fill="url(#ffo)"/><path d="M47 10 Q56 22 53 38" fill="none" stroke="#f8e040" stroke-width="2.5"/></svg><div class="t" style="left:253px;top:1396.3px;font-size:22px;color:#fff;font-weight:normal;letter-spacing:-0.8px">Reso...</div><svg style="left:357px;top:1375px" width="56" height="58" viewBox="0 0 56 58"><path d="M2 10 Q2 4 8 4 L18 4 L22 8 L48 10 L50 14 L48 50 L10 54 Z" fill="#3a3a3a"/><path d="M8 18 L52 14 L54 48 L12 54 Z" fill="#d8d8d8"/><path d="M8 18 L52 14 L52 22 L8 26 Z" fill="#f0f0f0"/><path d="M20 25 L22 52" stroke="#a0a0a0" stroke-width="1"/></svg><div class="a" style="left:431px;top:1372px;width:158px;height:68px;border:1px solid rgba(255,255,255,0.85);border-radius:3px;background:linear-gradient(170deg,rgba(255,255,255,0.7) 0%,rgba(255,255,255,0.45) 40%,rgba(255,255,255,0.3) 60%,rgba(255,255,255,0.45) 100%)"></div><svg style="left:440px;top:1375px" width="61" height="61" viewBox="0 0 61 61"><defs><linearGradient id="rbg2" x1="0" y1="0" x2="0" y2="1"><stop offset="0" stop-color="#e4eaef"/><stop offset="1" stop-color="#c9d3db"/></linearGradient><linearGradient id="rbd2" x1="0" y1="0" x2="0" y2="1"><stop offset="0" stop-color="#9fb2c0"/><stop offset="0.5" stop-color="#4d6679"/><stop offset="1" stop-color="#8ea2b2"/></linearGradient></defs><g transform="scale(1.0)"><rect x="0" y="0" width="61" height="61" rx="9.15" fill="url(#rbg2)"/><path d="M0 13 C8 12 16 16 22 24 C27 30 33 32 40 31 C48 30 55 22 61 15 L61 47 C54 47 47 46 40 42 C33 38 27 32 20 29 C13 27 6 31 0 35 Z" fill="url(#rbd2)"/></g></svg><div class="t" style="left:506px;top:1396.3px;font-size:22px;color:#fff;font-weight:normal;letter-spacing:-0.8px">Reso...</div><div class="a" style="left:1996px;top:1392px;width:30px;height:30px;background:#3a3a3a"></div><svg style="left:1996px;top:1392px" width="30" height="30" viewBox="0 0 30 30"><circle cx="10" cy="7" r="1.8" fill="#7ef010"/><circle cx="14" cy="8" r="1.8" fill="#7ef010"/><circle cx="18" cy="9" r="1.8" fill="#7ef010"/><circle cx="22" cy="11" r="1.8" fill="#7ef010"/><circle cx="25" cy="13" r="1.8" fill="#7ef010"/><circle cx="6" cy="10" r="1.8" fill="#7ef010"/><circle cx="4" cy="14" r="1.8" fill="#7ef010"/><circle cx="3" cy="18" r="1.8" fill="#7ef010"/><circle cx="4" cy="22" r="1.8" fill="#7ef010"/><circle cx="6" cy="26" r="1.8" fill="#7ef010"/><circle cx="10" cy="28" r="1.8" fill="#7ef010"/><circle cx="14" cy="28" r="1.8" fill="#7ef010"/><circle cx="18" cy="28" r="1.8" fill="#7ef010"/><circle cx="22" cy="27" r="1.8" fill="#7ef010"/><circle cx="24" cy="24" r="1.8" fill="#7ef010"/><circle cx="22" cy="20" r="1.8" fill="#7ef010"/><circle cx="18" cy="19" r="1.8" fill="#7ef010"/></svg><svg style="left:2041px;top:1392px" width="30" height="30" viewBox="0 0 30 30"><defs><linearGradient id="rbg3" x1="0" y1="0" x2="0" y2="1"><stop offset="0" stop-color="#e4eaef"/><stop offset="1" stop-color="#c9d3db"/></linearGradient><linearGradient id="rbd3" x1="0" y1="0" x2="0" y2="1"><stop offset="0" stop-color="#9fb2c0"/><stop offset="0.5" stop-color="#4d6679"/><stop offset="1" stop-color="#8ea2b2"/></linearGradient></defs><g transform="scale(0.4918032786885246)"><rect x="0" y="0" width="61" height="61" rx="10.370000000000001" fill="url(#rbg3)"/><path d="M0 13 C8 12 16 16 22 24 C27 30 33 32 40 31 C48 30 55 22 61 15 L61 47 C54 47 47 46 40 42 C33 38 27 32 20 29 C13 27 6 31 0 35 Z" fill="url(#rbd3)"/></g></svg><svg style="left:2086px;top:1392px" width="30" height="30" viewBox="0 0 30 30"><rect x="0" y="0" width="30" height="30" fill="#3c4438"/><rect x="1" y="11" width="3" height="16" fill="#30e0c0"/><rect x="1" y="8" width="3" height="3" fill="#e8e020"/><rect x="1" y="3" width="3" height="3" fill="#10d040"/><rect x="6" y="14" width="3" height="13" fill="#30e0c0"/><rect x="6" y="11" width="3" height="3" fill="#e8e020"/><rect x="6" y="3" width="3" height="3" fill="#10d040"/><rect x="11" y="17" width="3" height="10" fill="#30e0c0"/><rect x="11" y="14" width="3" height="3" fill="#e8e020"/><rect x="11" y="3" width="3" height="3" fill="#10d040"/><rect x="16" y="13" width="3" height="14" fill="#30e0c0"/><rect x="16" y="10" width="3" height="3" fill="#e8e020"/><rect x="16" y="3" width="3" height="3" fill="#10d040"/><rect x="21" y="16" width="3" height="11" fill="#30e0c0"/><rect x="21" y="13" width="3" height="3" fill="#e8e020"/><rect x="21" y="3" width="3" height="3" fill="#10d040"/><rect x="26" y="12" width="3" height="15" fill="#30e0c0"/><rect x="26" y="9" width="3" height="3" fill="#e8e020"/><rect x="26" y="3" width="3" height="3" fill="#10d040"/><rect x="0" y="26" width="30" height="3" fill="#eee"/></svg><svg style="left:2131px;top:1392px" width="32" height="30" viewBox="0 0 32 30"><path d="M8 6 L24 20" stroke="#303030" stroke-width="2.5"/><path d="M3 11 L11 3 L14 7 L7 14 Z" fill="#6a6a5a"/><text x="0" y="30" font-family="Liberation Mono" font-weight="bold" font-size="12" fill="#f00" transform="scale(1.45,1)">DSP</text></svg><svg style="left:2177px;top:1392px" width="30" height="30" viewBox="0 0 30 30"><circle cx="15" cy="15" r="13" fill="#f0c890" stroke="#807088" stroke-width="1.2"/><path d="M2 16 Q15 8 28 15 Q28 28 15 28 Q2 28 2 16 Z" fill="#7898c8"/></svg><svg style="left:2221px;top:1394px" width="30" height="27" viewBox="0 0 30 27"><path d="M15 1 L29 25 Q30 27 27 27 L3 27 Q0 27 1 25 Z" fill="#f0a030"/><rect x="13" y="7" width="4" height="11" rx="1.5" fill="#fff"/><circle cx="15" cy="22" r="2.2" fill="#fff"/></svg><svg style="left:2267px;top:1393px" width="29" height="29" viewBox="0 0 29 29"><rect x="0.5" y="0.5" width="28" height="28" rx="3" fill="#2a2c2e" stroke="#666"/><rect x="12" y="6" width="13" height="16" fill="#76b900"/><path d="M4 14 Q12 6 22 12 Q14 22 4 14 Z" fill="none" stroke="#76b900" stroke-width="2"/></svg><svg style="left:2311px;top:1393px" width="30" height="29" viewBox="0 0 30 29"><path d="M1 10 L8 10 L16 1 L16 28 L8 19 L1 19 Z" fill="#e06838" stroke="#402018" stroke-width="1.5"/><path d="M20 8 Q24 14 20 21" fill="none" stroke="#501808" stroke-width="1.5"/><path d="M24 4 Q30 14 24 25" fill="none" stroke="#501808" stroke-width="1.5"/></svg><svg style="left:2356px;top:1393px" width="30" height="29" viewBox="0 0 30 29"><path d="M1 10 L8 10 L16 1 L16 28 L8 19 L1 19 Z" fill="#f4f4f4" stroke="#303030" stroke-width="1.5"/><path d="M20 10 Q22 14 20 18" fill="none" stroke="#ddd" stroke-width="1.2"/><path d="M23 7 Q27 14 23 21" fill="none" stroke="#ddd" stroke-width="1.2"/><path d="M26 4 Q31 14 26 24" fill="none" stroke="#ddd" stroke-width="1.2"/></svg><div class="t" style="left:2446px;top:1383.15px;font-size:21px;color:#fff;font-weight:normal;letter-spacing:-0.3px">17:50</div><div class="t" style="left:2415px;top:1414.15px;font-size:21px;color:#fff;font-weight:normal;letter-spacing:0.4px">28/01/2015</div><div class="a" style="left:2545px;top:1373px;width:15px;height:67px;border:1px solid rgba(255,255,255,0.4);background:linear-gradient(#9a88b0,#7a6694)"></div><svg style="left:756px;top:66px" width="22" height="32" viewBox="0 0 22 32"><path d="M1 1 L1 24 L6 19 L10 29 L14 27 L10 18 L17 18 Z" fill="#fff" stroke="#111" stroke-width="1.3" stroke-linejoin="round"/></svg></body></html>
